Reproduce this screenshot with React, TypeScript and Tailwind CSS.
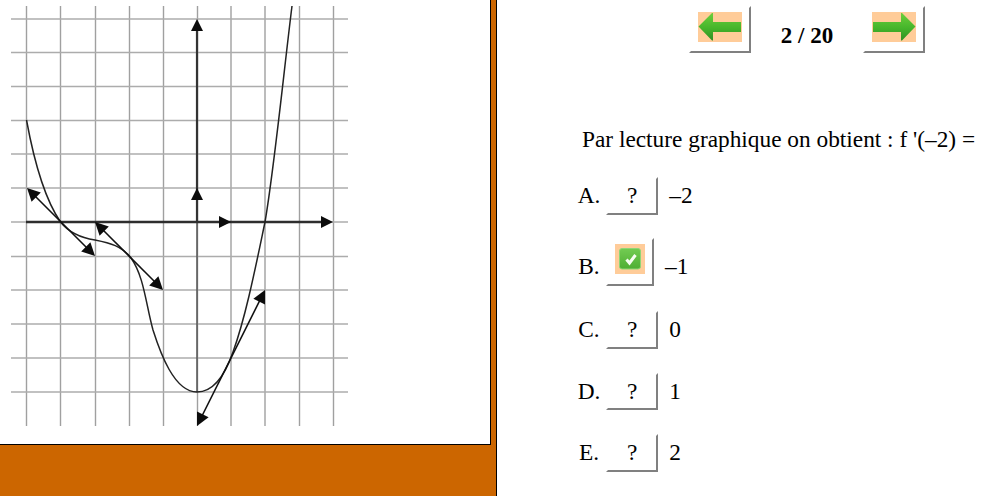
const gridX = [26.5, 60.5, 95.5, 129.5, 163.5, 197.5, 231, 265, 299.5, 333.5];
const gridY = [19, 52.5, 86.5, 120.5, 154, 188, 222, 256.5, 290, 324, 358, 392];

const options = [
  { label: 'A.', value: '–2', checked: false },
  { label: 'B.', value: '–1', checked: true },
  { label: 'C.', value: '0', checked: false },
  { label: 'D.', value: '1', checked: false },
  { label: 'E.', value: '2', checked: false },
];

function Tip({ x, y, angle, size = 12 }: { x: number; y: number; angle: number; size?: number }) {
  // pointe dirigée vers le haut avant rotation
  return (
    <polygon
      points={`0,0 ${-size / 2},${size} ${size / 2},${size}`}
      transform={`translate(${x} ${y}) rotate(${angle})`}
      fill="#0c0c0c"
    />
  );
}

function Graph() {
  return (
    <svg width="360" height="440" viewBox="0 0 360 440" className="blur-[0.4px]">
      {gridX.map((x) => (
        <line key={x} x1={x} y1="6" x2={x} y2="426" stroke="#a0a0a0" strokeWidth="1.4" />
      ))}
      {gridY.map((y) => (
        <line key={y} x1="11" y1={y} x2="348" y2={y} stroke="#acacac" strokeWidth="1.5" />
      ))}
      {/* axes */}
      <line x1="197" y1="24" x2="197" y2="222" stroke="#333" strokeWidth="2.2" />
      <line x1="197" y1="222" x2="197" y2="392" stroke="#555" strokeWidth="1.5" />
      <line x1="26" y1="222" x2="326" y2="222" stroke="#2e2e2e" strokeWidth="2.4" />
      <Tip x={197} y={19} angle={0} />
      <Tip x={197} y={188} angle={0} />
      <Tip x={231} y={222} angle={90} />
      <Tip x={333} y={222} angle={90} />
      {/* courbe */}
      <path
        d="M26.5 120 C32 150 42 195 60.5 222 C70 234 82 238 95 240 C110 243 122 246 131 258 C144 276 146 305 153 330 C160 352 174 392 197 392 C212 392 224 378 233 352 C246 316 256 265 265 222 C274 170 284 70 292 6"
        fill="none"
        stroke="#222"
        strokeWidth="1.5"
      />
      {/* tangentes */}
      <line x1="30" y1="191" x2="90" y2="251" stroke="#111" strokeWidth="1.6" />
      <line x1="98" y1="225" x2="158" y2="285" stroke="#111" strokeWidth="1.6" />
      <line x1="200" y1="420" x2="262" y2="296" stroke="#111" strokeWidth="1.6" />
      <Tip x={27} y={188} angle={-45} size={13} />
      <Tip x={95} y={256} angle={135} size={13} />
      <Tip x={95} y={222} angle={-45} size={13} />
      <Tip x={163} y={290} angle={135} size={13} />
      <Tip x={197} y={426} angle={206.5} size={13} />
      <Tip x={265} y={290} angle={26.5} size={13} />
    </svg>
  );
}

function Arrow({ dir }: { dir: 'left' | 'right' }) {
  const id = `arrow-${dir}`;
  return (
    <svg width="44" height="30" viewBox="0 0 44 30" className="bg-[#ffcc99]">
      <defs>
        <linearGradient id={id} x1="0" y1="0" x2="0" y2="1">
          <stop offset="0" stopColor="#6ccf3c" />
          <stop offset="0.55" stopColor="#45b52b" />
          <stop offset="1" stopColor="#2f8f24" />
        </linearGradient>
      </defs>
      <path
        d="M0.5 14.5 L14 1 L15 1 L15 10 L43 10 L43 20 L15 20 L15 28.5 L14 28.5 Z"
        fill={`url(#${id})`}
        className="blur-[0.4px]"
        transform={dir === 'right' ? 'matrix(-1 0 0 1 44 0)' : undefined}
      />
    </svg>
  );
}

function CheckIcon() {
  return (
    <svg width="30" height="30" viewBox="0 0 30 30" className="inline-block bg-[#ffcc99] align-baseline">
      <defs>
        <linearGradient id="check-bg" x1="0" y1="0" x2="0" y2="1">
          <stop offset="0" stopColor="#72cc52" />
          <stop offset="1" stopColor="#4fae33" />
        </linearGradient>
      </defs>
      <g className="blur-[0.5px]">
        <rect x="4.5" y="4.5" width="21" height="20.5" rx="2.5" fill="url(#check-bg)" stroke="#8fd677" />
        <path d="M11.5 15.5 L14.5 19 L20.5 11" fill="none" stroke="#f7fdf2" strokeWidth="3" />
      </g>
    </svg>
  );
}

const raised = 'border-2 border-white border-r-[#808080] border-b-[#808080]';

export default function App() {
  return (
    <div className="flex h-[496px] w-[990px] overflow-hidden bg-white font-['Liberation_Serif',serif] text-black">
      {/* colonne gauche */}
      <div className="w-[497px] shrink-0 border-r border-black bg-[#cc6600]">
        <div className="h-[445px] w-[491px] border-r border-b border-black bg-white">
          <Graph />
        </div>
      </div>

      {/* colonne droite */}
      <div className="flex min-w-0 flex-1 flex-col">
        <div className="ml-[192px] mt-[6px] flex items-start">
          <button className={`${raised} flex h-[47px] w-[62px] items-start justify-center pt-[4px]`}>
            <Arrow dir="left" />
          </button>
          <div className="w-[112px] pt-[17px] text-center text-[23px] leading-[26px] font-bold">2 / 20</div>
          <button className={`${raised} flex h-[47px] w-[62px] items-start justify-center pt-[4px]`}>
            <Arrow dir="right" />
          </button>
        </div>

        <p className="ml-[85px] mt-[73px] whitespace-nowrap text-[23.33px] leading-[26px]">
          Par lecture graphique on obtient : f '(–2) =
        </p>

        <div className="mt-[25px] flex flex-col gap-[24px] text-[23.33px] leading-[27px]">
          {options.map((o) => (
            <div key={o.label} className={`flex items-baseline ${o.checked ? '-mt-[1px] mb-[1px]' : ''}`}>
              <span className="ml-[74px] w-[36px] text-center">{o.label}</span>
              <button className={`-ml-[1px] ${raised} ${o.checked ? 'px-[7px] pt-1 pb-[4.4px]' : 'px-[19px] pt-[3px] pb-[3.65px]'}`}>
                {o.checked ? <CheckIcon /> : '?'}
              </button>
              <span className="ml-[11px]">{o.value}</span>
            </div>
          ))}
        </div>
      </div>
    </div>
  );
}
